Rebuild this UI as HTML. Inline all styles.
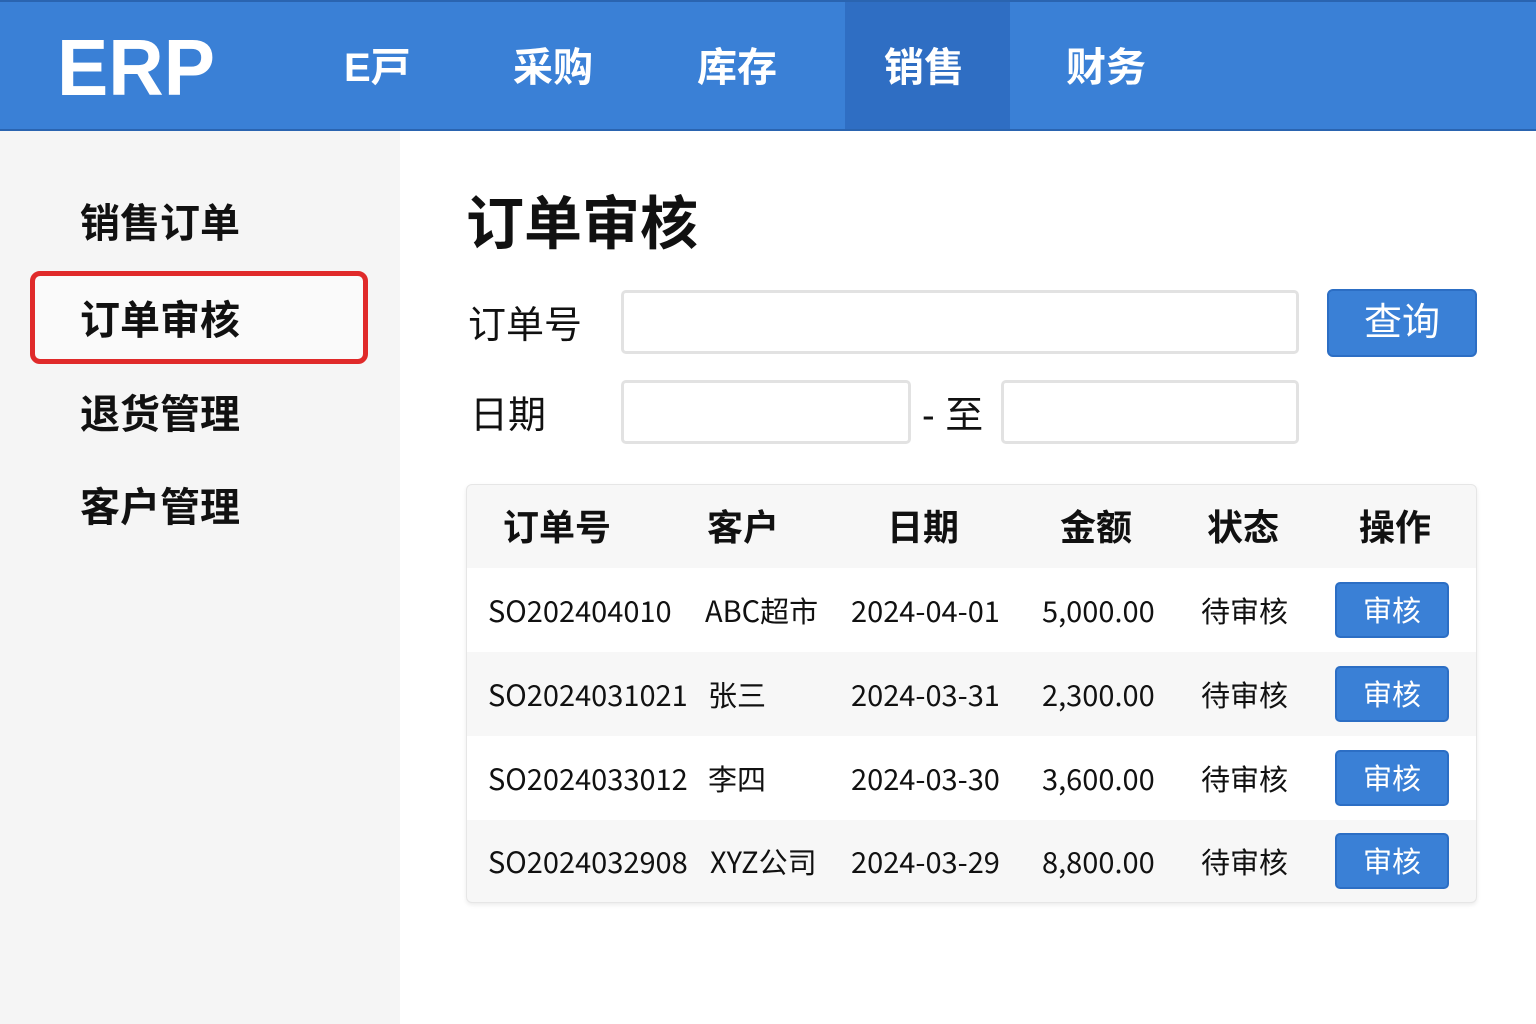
<!DOCTYPE html>
<html><head><meta charset="utf-8"><style>
*{margin:0;padding:0;box-sizing:border-box}
body{width:1536px;height:1024px;position:relative;background:#fff;font-family:"Liberation Sans","Noto Sans CJK SC",sans-serif;color:#111;overflow:hidden}
.a{position:absolute;white-space:nowrap}
.hdr{left:0;top:0;width:1536px;height:131px;background:#3a80d6;border-top:2px solid #2a64b0;border-bottom:2px solid #2a64b0}
.nav{color:#fff;font-size:40px;font-weight:bold;top:35px}
.side{left:0;top:131px;width:400px;height:893px;background:#f5f5f5}
.si{font-size:40px;font-weight:bold;left:80px}
.inp{background:#fff;border:3px solid #e2e2e2;border-radius:5px;height:64px}
.tbl{left:466px;top:484px;width:1011px;height:419px;border:1px solid #e6e6e6;border-radius:6px;background:#f7f7f7;box-shadow:0 2px 4px rgba(0,0,0,.08);overflow:hidden}
.row{position:absolute;left:0;width:1011px;height:84px}
.c{position:absolute;font-size:29px;top:0;height:84px;line-height:84px;white-space:nowrap;font-family:"Noto Sans CJK SC",sans-serif}
.h{font-size:36px;font-weight:bold;top:-2px}
.btn{position:absolute;left:868px;top:14px;width:114px;height:56px;background:#3a80d6;border:2px solid #2c6ec4;border-radius:5px;color:#fff;font-size:29px;text-align:center;line-height:50px;font-family:"Noto Sans CJK SC",sans-serif}
</style></head><body>
<div class="a hdr"></div>
<div class="a" style="left:845px;top:2px;width:165px;height:127px;background:#2f6ec3"></div>
<div class="a" style="left:57px;top:22px;color:#fff;font-size:80px;font-weight:bold;transform:scaleX(0.96);transform-origin:left">ERP</div>
<div class="a nav" style="left:344px">E戸</div>
<div class="a nav" style="left:513px">采购</div>
<div class="a nav" style="left:697px">库存</div>
<div class="a nav" style="left:884px">销售</div>
<div class="a nav" style="left:1066px">财务</div>
<div class="a side"></div>
<div class="a si" style="top:191px">销售订单</div>
<div class="a" style="left:30px;top:271px;width:338px;height:93px;border:5px solid #e02a2a;border-radius:10px;background:#fafafa"></div>
<div class="a si" style="top:288px">订单审核</div>
<div class="a si" style="top:382px">退货管理</div>
<div class="a si" style="top:475px">客户管理</div>
<div class="a" style="left:466px;top:177px;font-size:58px;font-weight:bold">订单审核</div>
<div class="a" style="left:468px;top:294px;font-size:38px">订单号</div>
<div class="a inp" style="left:621px;top:290px;width:678px"></div>
<div class="a" style="left:1327px;top:289px;width:150px;height:68px;background:#3a80d6;border:2px solid #2c6ec4;border-radius:6px;color:#fff;font-size:38px;text-align:center;line-height:64px">查询</div>
<div class="a" style="left:470px;top:384px;font-size:38px">日期</div>
<div class="a inp" style="left:621px;top:380px;width:290px"></div>
<div class="a" style="left:922px;top:384px;font-size:38px">- 至</div>
<div class="a inp" style="left:1001px;top:380px;width:298px"></div>
<div class="a tbl">
<div class="row" style="top:0;height:83px">
<div class="c h" style="left:36px">订单号</div><div class="c h" style="left:240px">客户</div><div class="c h" style="left:420px">日期</div><div class="c h" style="left:593px">金额</div><div class="c h" style="left:740px">状态</div><div class="c h" style="left:892px">操作</div></div>
<div class="row" style="top:83px;background:#fff"><div class="c" style="left:21px">SO202404010</div><div class="c" style="left:238px">ABC超市</div><div class="c" style="left:384px">2024-04-01</div><div class="c" style="left:575px">5,000.00</div><div class="c" style="left:734px">待审核</div><div class="btn">审核</div></div>
<div class="row" style="top:167px"><div class="c" style="left:21px">SO2024031021</div><div class="c" style="left:241px">张三</div><div class="c" style="left:384px">2024-03-31</div><div class="c" style="left:575px">2,300.00</div><div class="c" style="left:734px">待审核</div><div class="btn">审核</div></div>
<div class="row" style="top:251px;background:#fff"><div class="c" style="left:21px">SO2024033012</div><div class="c" style="left:241px">李四</div><div class="c" style="left:384px">2024-03-30</div><div class="c" style="left:575px">3,600.00</div><div class="c" style="left:734px">待审核</div><div class="btn">审核</div></div>
<div class="row" style="top:334px"><div class="c" style="left:21px">SO2024032908</div><div class="c" style="left:243px">XYZ公司</div><div class="c" style="left:384px">2024-03-29</div><div class="c" style="left:575px">8,800.00</div><div class="c" style="left:734px">待审核</div><div class="btn">审核</div></div>
</div>
</body></html>
